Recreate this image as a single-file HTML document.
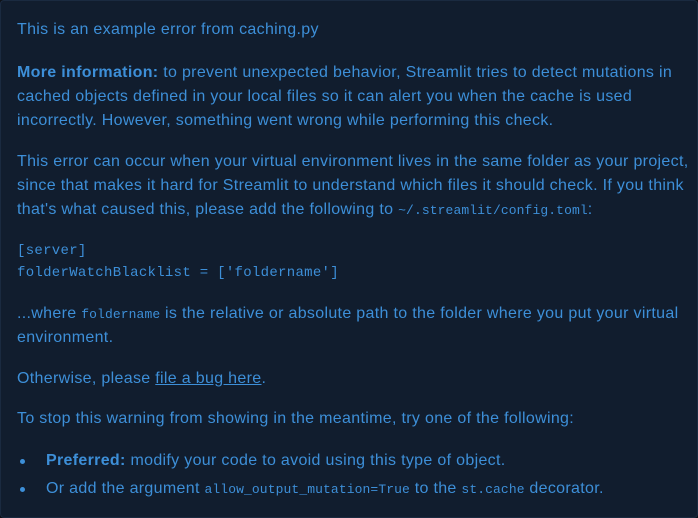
<html><head><style>
body{margin:0;background:#0e1117;}
.box{position:absolute;left:0;top:0;width:696px;height:516px;border:1px solid #1a2a40;border-radius:4px;background:#111d2e;}
.l{position:absolute;left:17px;white-space:nowrap;font-family:"Liberation Sans",sans-serif;font-size:16px;letter-spacing:0.32px;line-height:24px;color:#3d8fd8;}
code{font-family:"Liberation Mono",monospace;font-size:13px;letter-spacing:0.1px;}
.m{font-family:"Liberation Mono",monospace;font-size:14px;letter-spacing:0.3px;}
b{font-weight:bold;}
a{color:#3d8fd8;text-decoration:underline;}
.dot{position:absolute;left:20px;width:5px;height:5px;border-radius:50%;background:#3d8fd8;}
</style></head><body><div class="box"></div>
<div class="l" style="top:18px">This is an example error from caching.py</div>
<div class="l" style="top:61px"><b>More information:</b> to prevent unexpected behavior, Streamlit tries to detect mutations in</div>
<div class="l" style="top:85px">cached objects defined in your local files so it can alert you when the cache is used</div>
<div class="l" style="top:109px">incorrectly. However, something went wrong while performing this check.</div>
<div class="l" style="top:150px">This error can occur when your virtual environment lives in the same folder as your project,</div>
<div class="l" style="top:174px">since that makes it hard for Streamlit to understand which files it should check. If you think</div>
<div class="l" style="top:198px">that's what caused this, please add the following to <code>~/.streamlit/config.toml</code>:</div>
<div class="l m" style="top:239px">[server]</div>
<div class="l m" style="top:261px">folderWatchBlacklist = ['foldername']</div>
<div class="l" style="top:302px">...where <code>foldername</code> is the relative or absolute path to the folder where you put your virtual</div>
<div class="l" style="top:326px">environment.</div>
<div class="l" style="top:367px">Otherwise, please <a>file a bug here</a>.</div>
<div class="l" style="top:407px">To stop this warning from showing in the meantime, try one of the following:</div>
<div class="dot" style="top:459px"></div>
<div class="l" style="top:449px;left:46px"><b>Preferred:</b> modify your code to avoid using this type of object.</div>
<div class="dot" style="top:487px"></div>
<div class="l" style="top:477px;left:46px">Or add the argument <code>allow_output_mutation=True</code> to the <code>st.cache</code> decorator.</div>
</body></html>
